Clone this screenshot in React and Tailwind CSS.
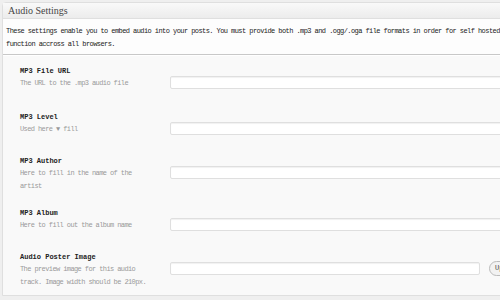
import React from "react";

const fields = [
  { label: "MP3 File URL", desc: ["The URL to the .mp3 audio file"], h: "h-[46px]" },
  { label: "MP3 Level", desc: ["Used here \u25BC fill"], h: "h-[44px]" },
  { label: "MP3 Author", desc: ["Here to fill in the name of the", "artist"], h: "h-[52px]" },
  { label: "MP3 Album", desc: ["Here to fill out the album name"], h: "h-[44px]" },
  {
    label: "Audio Poster Image",
    desc: ["The preview image for this audio", "track. Image width should be 210px."],
    h: "h-[51px]",
    upload: true,
  },
];

const mono = { fontFamily: '"Liberation Mono", "DejaVu Sans Mono", monospace' };

const Row = ({ item }) => (
  <div className={`flex pt-[7px] ${item.h}`}>
    <div className="w-[167px] shrink-0 pl-[17px]" style={mono}>
      <p className="text-[7px] leading-[12px] font-bold text-[#222]">{item.label}</p>
      {item.desc.map((line, i) => (
        <p key={i} className="text-[7px] leading-[13px] tracking-[-0.6px] text-[#999] whitespace-nowrap">
          {line}
        </p>
      ))}
    </div>
    <div className="flex items-center gap-[9px] mt-[10px] h-[14px]">
      <div
        className={`${item.upload ? "w-[310px]" : "w-[360px]"} h-[13px] bg-white border border-[#dfdfdf] shadow-[inset_0_1px_1px_rgba(0,0,0,0.06)] rounded-[2px]`}
      ></div>
      {item.upload && (
        <div
          className="h-[15px] px-[5px] rounded-full border border-[#bbb] bg-[#f2f2f2] text-[7px] leading-[13px] text-[#464646]"
          style={mono}
        >
          Upload
        </div>
      )}
    </div>
  </div>
);

export default function App() {
  return (
    <div className="w-[500px] h-[300px] overflow-hidden bg-[#efefef]">
      <div className="w-[520px] ml-[2px] mt-[2px] border border-[#dfdfdf] rounded-t-[4px] bg-[#f9f9f9]">
        <div className="h-[16px] border-b border-[#dfdfdf] bg-gradient-to-b from-[#f9f9f9] to-[#ececec] pl-[5px] flex items-center">
          <h3
            className="text-[10px] text-[#464646]"
            style={{ fontFamily: '"Liberation Serif", Georgia, serif' }}
          >
            Audio Settings
          </h3>
        </div>
        <div className="bg-[#fdfdfd] pt-[6px] pl-[3px] pb-[3px] border-b border-[#c8c8c8]" style={mono}>
          <p className="text-[7px] leading-[13px] tracking-[-0.57px] text-[#222] whitespace-nowrap">
            These settings enable you to embed audio into your posts. You must provide both .mp3 and .ogg/.oga file formats in order for self hosted
          </p>
          <p className="text-[7px] leading-[13px] tracking-[-0.57px] text-[#222]">function accross all browsers.</p>
        </div>
        <div className="border-t border-white pt-[2px]">
          {fields.map((item, i) => (
            <Row key={i} item={item} />
          ))}
        </div>
      </div>
    </div>
  );
}
